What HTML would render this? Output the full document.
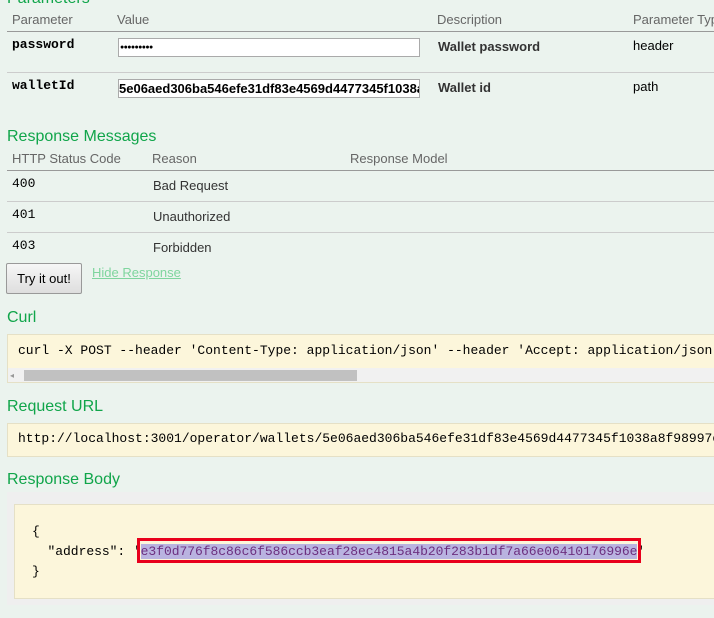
<!DOCTYPE html>
<html><head><style>
body{margin:0;width:714px;height:618px;overflow:hidden;background:#ebf3ee;font-family:"Liberation Sans",sans-serif;font-size:13px;color:#333;position:relative}
.a{position:absolute;white-space:nowrap}
.m{font-family:"Liberation Mono",monospace;font-size:13px}
.h{color:#10a54a;font-size:16px}
.th{color:#666;font-size:13px}
.line{position:absolute;left:7px;right:0;height:1px;background:#ccc}
.box{position:absolute;left:7px;right:-4px;background:#fcf6db;border:1px solid #e5e0c6;box-sizing:border-box}
</style></head><body>
<div class="a h" style="left:7px;top:-10px">Parameters</div>
<div class="a th" style="left:12px;top:12px">Parameter</div>
<div class="a th" style="left:117px;top:12px">Value</div>
<div class="a th" style="left:437px;top:12px">Description</div>
<div class="a th" style="left:633px;top:12px">Parameter Type</div>
<div class="line" style="top:31px;height:1px;background:#999"></div>
<div class="a m" style="left:12px;top:37px;font-weight:bold;color:#000">password</div>
<div class="a" style="left:118px;top:38px;width:302px;height:19px;background:#fff;border:1px solid #aaa;box-sizing:border-box;font-size:7px;line-height:17px;padding-left:1px;color:#000;letter-spacing:-0.6px">●●●●●●●●●</div>
<div class="a" style="left:438px;top:39px;font-weight:bold">Wallet password</div>
<div class="a" style="left:633px;top:38px;color:#000">header</div>
<div class="line" style="top:72px"></div>
<div class="a m" style="left:12px;top:78px;font-weight:bold;color:#000">walletId</div>
<div class="a" style="left:118px;top:79px;width:302px;height:19px;background:#fff;border:1px solid #aaa;box-sizing:border-box;overflow:hidden;font-weight:bold;line-height:17px;color:#000">5e06aed306ba546efe31df83e4569d4477345f1038a8f98997</div>
<div class="a" style="left:438px;top:80px;font-weight:bold">Wallet id</div>
<div class="a" style="left:633px;top:79px;color:#000">path</div>
<div class="a h" style="left:7px;top:128px">Response Messages</div>
<div class="a th" style="left:12px;top:151px">HTTP Status Code</div>
<div class="a th" style="left:152px;top:151px">Reason</div>
<div class="a th" style="left:350px;top:151px">Response Model</div>
<div class="line" style="top:170px;background:#999"></div>
<div class="a m" style="left:12px;top:176px;color:#000">400</div>
<div class="a" style="left:153px;top:178px">Bad Request</div>
<div class="line" style="top:201px"></div>
<div class="a m" style="left:12px;top:207px;color:#000">401</div>
<div class="a" style="left:153px;top:209px">Unauthorized</div>
<div class="line" style="top:232px"></div>
<div class="a m" style="left:12px;top:238px;color:#000">403</div>
<div class="a" style="left:153px;top:240px">Forbidden</div>
<div class="a" style="left:6px;top:263px;width:76px;height:31px;border:1px solid #999;border-radius:2px;background:linear-gradient(#f6f6f6,#dedede);box-sizing:border-box;line-height:29px;text-align:center;color:#000">Try it out!</div>
<div class="a" style="left:92px;top:265px;color:#7fd59e;text-decoration:underline">Hide Response</div>
<div class="a h" style="left:7px;top:309px">Curl</div>
<div class="box" style="top:334px;height:49px">
<div class="a m" style="left:10px;top:8px;color:#000">curl -X POST --header 'Content-Type: application/json' --header 'Accept: application/json' -d</div>
<div class="a" style="left:0;right:0;top:33px;height:14px;background:#f1f1f1"></div>
<div class="a" style="left:2px;top:36px;font-size:8px;color:#999">◂</div>
<div class="a" style="left:16px;top:35px;width:333px;height:11px;background:#c1c1c1"></div>
</div>
<div class="a h" style="left:7px;top:398px">Request URL</div>
<div class="box" style="top:423px;height:34px">
<div class="a m" style="left:10px;top:7px;color:#000">http://localhost:3001/operator/wallets/5e06aed306ba546efe31df83e4569d4477345f1038a8f98997c</div>
</div>
<div class="a h" style="left:7px;top:471px">Response Body</div>
<div class="a" style="left:7px;right:0;top:492px;height:113px;background:#efefef"></div>
<div class="box" style="left:14px;top:504px;height:95px;right:-4px"></div>
<div class="a m" style="left:32px;top:522px;color:#000;line-height:20px;letter-spacing:-0.04px">{<br>&nbsp;&nbsp;"address": '<span style="background:#b9b3e0;color:#6c2f7f">e3f0d776f8c86c6f586ccb3eaf28ec4815a4b20f283b1df7a66e06410176996e</span>'<br>}</div>
<div class="a" style="left:137px;top:538px;width:504px;height:25px;border:3px solid #e8001c;box-sizing:border-box"></div>
</body></html>
